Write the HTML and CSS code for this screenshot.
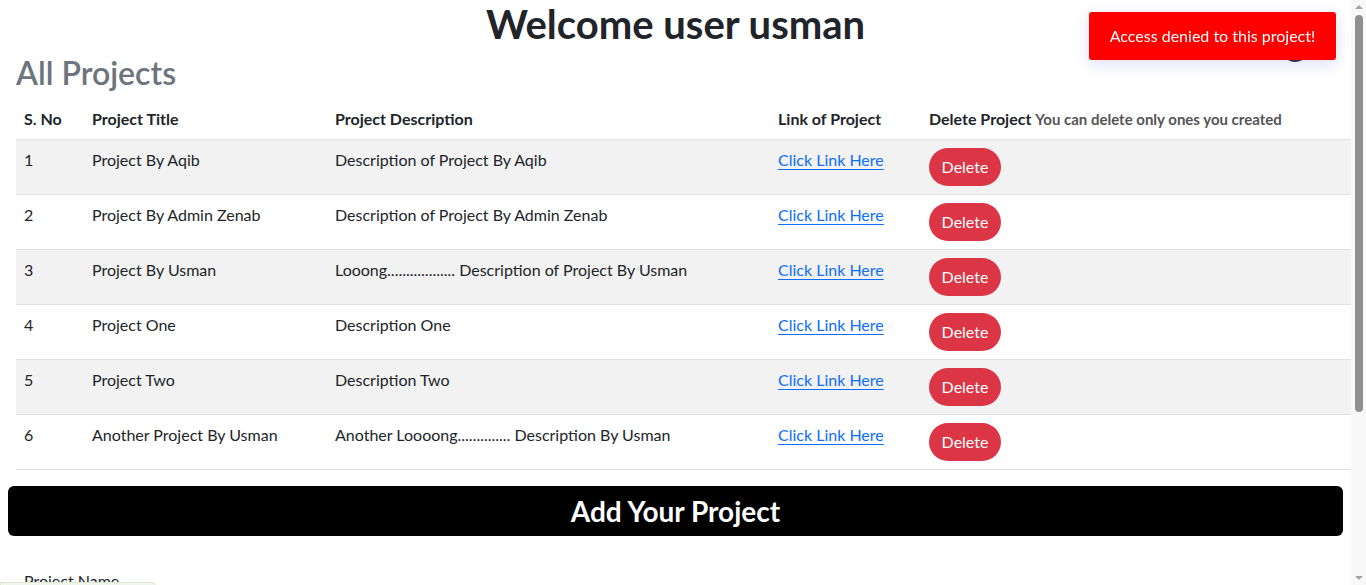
FILE: index.html
```html
<!DOCTYPE html>
<html lang="en">
<head>
<meta charset="utf-8">
<title>Projects</title>
<link rel="stylesheet" href="styles.css">
</head>
<body>
<div class="page">
  <h1 class="welcome">Welcome user usman</h1>
  <section class="projects">
    <h2 class="section-title">All Projects</h2>
    <table class="project-table">
      <colgroup>
        <col class="c-no"><col class="c-title"><col class="c-desc"><col class="c-link"><col class="c-del">
      </colgroup>
      <thead>
        <tr>
          <th>S. No</th>
          <th>Project Title</th>
          <th>Project Description</th>
          <th>Link of Project</th>
          <th>Delete Project <small class="hint">You can delete only ones you created</small></th>
        </tr>
      </thead>
      <tbody>
        <tr><td>1</td><td>Project By Aqib</td><td>Description of Project By Aqib</td><td><a href="#">Click Link Here</a></td><td><button class="btn-delete">Delete</button></td></tr>
        <tr><td>2</td><td>Project By Admin Zenab</td><td>Description of Project By Admin Zenab</td><td><a href="#">Click Link Here</a></td><td><button class="btn-delete">Delete</button></td></tr>
        <tr><td>3</td><td>Project By Usman</td><td>Looong.................. Description of Project By Usman</td><td><a href="#">Click Link Here</a></td><td><button class="btn-delete">Delete</button></td></tr>
        <tr><td>4</td><td>Project One</td><td>Description One</td><td><a href="#">Click Link Here</a></td><td><button class="btn-delete">Delete</button></td></tr>
        <tr><td>5</td><td>Project Two</td><td>Description Two</td><td><a href="#">Click Link Here</a></td><td><button class="btn-delete">Delete</button></td></tr>
        <tr><td>6</td><td>Another Project By Usman</td><td>Another Loooong.............. Description By Usman</td><td><a href="#">Click Link Here</a></td><td><button class="btn-delete">Delete</button></td></tr>
      </tbody>
    </table>
  </section>
  <h2 class="add-bar">Add Your Project</h2>
  <form class="add-form">
    <label class="field-label">Project Name</label>
    <input class="field-input" type="text">
    <label class="field-label">Project Description</label>
    <input class="field-input" type="text">
    <label class="field-label">Project Link</label>
    <input class="field-input" type="text">
  </form>
</div>
<span class="avatar"></span>
<div class="toast">Access denied to this project!</div>
<div class="corner-widget"></div>
<div class="scrollbar">
  <span class="arrow arrow-up"></span>
  <span class="thumb"></span>
  <span class="arrow arrow-down"></span>
</div>
</body>
</html>
```

FILE: styles.css
```css
* { box-sizing: border-box; }
html, body { margin: 0; padding: 0; }
body {
  font-family: Lato, "Noto Sans", sans-serif;
  font-size: 16px;
  line-height: 1.5;
  color: #212529;
  background: #fff;
  margin-right: 15px;
}
.page { padding: 0 8px 40px; }
.welcome {
  margin: 0;
  text-align: center;
  font-size: 40px;
  font-weight: 700;
  line-height: 48px;
}
.projects { margin: 0 -8px 16px 8px; }
.section-title {
  margin: 6px 0 7px;
  font-size: 32px;
  font-weight: 600;
  line-height: 38px;
  color: #6c757d;
}
.project-table {
  width: 100%;
  border-collapse: collapse;
  table-layout: fixed;
}
.c-no { width: 68px; }
.c-title { width: 243px; }
.c-desc { width: 443px; }
.c-link { width: 151px; }
.project-table th, .project-table td {
  text-align: left;
  vertical-align: top;
  padding: 8px;
  border-bottom: 1px solid #dee2e6;
  white-space: nowrap;
}
.project-table th { font-weight: 700; }
.project-table tbody tr:nth-child(odd) td { background: #f2f2f2; }
.hint { font-size: 15px; font-weight: 700; color: #555; }
.project-table a { color: #0d6efd; text-decoration: underline; text-underline-offset: 3px; }
.btn-delete {
  font: inherit;
  color: #fff;
  background: #dc3545;
  border: 0;
  border-radius: 19px;
  height: 38px;
  padding: 0 12px;
  width: 72px;
}
.add-bar {
  margin: 0;
  height: 50px;
  background: #000;
  color: #fff;
  border-radius: 6px;
  text-align: center;
  font-size: 28px;
  font-weight: 700;
  line-height: 50px;
}
.add-form { display: flex; flex-direction: column; padding: 29px 16px 0; }
.field-label { margin-top: 4px; }
.field-input {
  height: 38px;
  border: 1px solid #ced4da;
  border-radius: 6px;
  margin: 6px 0 12px;
}
.avatar {
  position: absolute;
  left: 1282px;
  top: 36px;
  width: 26px;
  height: 26px;
  border-radius: 50%;
  background: #2b2f45;
}
.toast {
  position: fixed;
  top: 12px;
  left: 1089px;
  width: 247px;
  height: 48px;
  background: #ff0000;
  color: #fff;
  border-radius: 3px;
  text-align: center;
  line-height: 48px;
  font-size: 16px;
  box-shadow: 0 4px 16px rgba(60, 70, 200, 0.18);
}
.corner-widget {
  position: fixed;
  left: 0;
  top: 582px;
  width: 156px;
  height: 30px;
  background: #f1f6ec;
  border: 1px solid #dce8d2;
  border-radius: 0 4px 0 0;
}
.scrollbar {
  position: fixed;
  top: 0;
  right: 0;
  width: 15px;
  height: 585px;
  background: #f8f8f8;
  display: flex;
  flex-direction: column;
  align-items: center;
}
.arrow {
  width: 0;
  height: 0;
  border-left: 4px solid transparent;
  border-right: 4px solid transparent;
}
.arrow-up { margin-top: 5px; border-bottom: 4px solid #a3a3a3; }
.arrow-down { margin-top: auto; margin-bottom: 5px; border-top: 4px solid #a3a3a3; }
.thumb {
  margin-top: 6px;
  width: 8px;
  height: 397px;
  border-radius: 4px;
  background: #8f8f8f;
}
```
